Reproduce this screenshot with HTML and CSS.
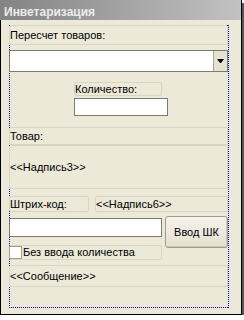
FILE: index.html
```html
<!DOCTYPE html>
<html>
<head>
<meta charset="utf-8">
<link rel="stylesheet" href="styles.css">
</head>
<body>
<div class="win">
  <div class="title">Инветаризация</div>
  <div class="form">
    <div class="lbl l1">Пересчет товаров:</div>
    <div class="combo">
      <div class="combo-field"></div>
      <div class="combo-btn"><svg width="7" height="4" viewBox="0 0 7 4"><path d="M0 0H7L4 4H3Z" fill="#000"/></svg></div>
    </div>
    <div class="qty">
      <div class="lbl qlbl">Количество:</div>
      <div class="input qinput"></div>
    </div>
    <div class="lbl tovar">Товар:</div>
    <div class="lbl n3">&lt;&lt;Надпись3&gt;&gt;</div>
    <div class="row bc">
      <div class="lbl bclbl">Штрих-код:</div>
      <div class="lbl n6">&lt;&lt;Надпись6&gt;&gt;</div>
    </div>
    <div class="row entry">
      <div class="col">
        <div class="input bcinput"></div>
        <div class="lbl chk"><span class="box"></span>Без ввода количества</div>
      </div>
      <div class="btn">Ввод ШК</div>
    </div>
    <div class="lbl msg">&lt;&lt;Сообщение&gt;&gt;</div>
  </div>
</div>
</body>
</html>
```
FILE: styles.css
```css
html, body {
  margin: 0;
  padding: 0;
  background: #ffffff;
}
body {
  font-family: "Liberation Sans", Arial, sans-serif;
  font-size: 11px;
  color: #000;
}
.win {
  width: 240px;
  height: 314px;
  border: 1px solid #000;
  border-top: 0;
  background: #ece9d8;
  box-shadow: 3px 3px 0 #575757;
}
.title {
  height: 20px;
  box-sizing: border-box;
  margin-left: -1px;
  padding: 6px 0 0 4px;
  line-height: 13px;
  font-size: 12px;
  font-weight: bold;
  color: #ececec;
  background: linear-gradient(to right, #838383, #c2c2c2);
}
.form {
  margin: 5px 0 0 8px;
  width: 218px;
  height: 281px;
  padding: 1px;
  background:
    url("data:image/svg+xml,%3Csvg xmlns='http://www.w3.org/2000/svg' width='2' height='1' shape-rendering='crispEdges'%3E%3Crect width='1' height='1' fill='%230000ff'/%3E%3C/svg%3E") left top / 2px 1px repeat-x,
    url("data:image/svg+xml,%3Csvg xmlns='http://www.w3.org/2000/svg' width='2' height='1' shape-rendering='crispEdges'%3E%3Crect width='1' height='1' fill='%230000ff'/%3E%3C/svg%3E") left bottom / 2px 1px repeat-x,
    url("data:image/svg+xml,%3Csvg xmlns='http://www.w3.org/2000/svg' width='1' height='2' shape-rendering='crispEdges'%3E%3Crect width='1' height='1' fill='%230000ff'/%3E%3C/svg%3E") left top / 1px 2px repeat-y,
    url("data:image/svg+xml,%3Csvg xmlns='http://www.w3.org/2000/svg' width='1' height='2' shape-rendering='crispEdges'%3E%3Crect width='1' height='1' fill='%230000ff'/%3E%3C/svg%3E") right top / 1px 2px repeat-y;
}
.form > * {
  margin-left: -1px;
}
.lbl {
  box-sizing: border-box;
  border: 1px solid #dad4c2;
  border-radius: 2px;
  display: flex;
  align-items: center;
  line-height: 13px;
  white-space: nowrap;
  background: #ece9d8;
}
.l1 {
  margin-top: -1px;
  height: 20px;
}
.combo {
  margin-top: 5px;
  height: 22px;
  box-sizing: border-box;
  border: 1px solid #7f7b6c;
  background: #fff;
  display: flex;
}
.combo-field {
  flex: 1;
}
.combo-btn {
  width: 13px;
  border-left: 1px solid #a9a592;
  background: #e6e2d2;
  display: flex;
  align-items: center;
  justify-content: center;
}
.qty {
  margin-top: 10px;
  margin-left: 64px !important;
  width: 94px;
}
.qlbl {
  width: 88px;
  height: 14px;
}
.input {
  box-sizing: border-box;
  background: #fff;
  border: 1px solid #7f7b6c;
}
.qinput {
  margin-top: 2px;
  height: 18px;
}
.tovar {
  margin-top: 11px;
  height: 18px;
}
.n3 {
  height: 44px;
}
.row {
  display: flex;
}
.bc {
  margin-top: 7px;
  height: 16px;
  gap: 6px;
}
.bclbl {
  width: 80px;
}
.n6 {
  flex: 1;
}
.entry {
  margin-top: 4px;
  gap: 3px;
  align-items: flex-start;
}
.col {
  width: 153px;
}
.bcinput {
  margin-top: 2px;
  height: 19px;
}
.chk {
  margin-top: 8px;
  height: 15px;
}
.box {
  width: 13px;
  height: 13px;
  box-sizing: border-box;
  margin-left: -1px;
  margin-right: 1px;
  background: #fff;
  border: 1px solid #a29e8c;
}
.btn {
  flex: 1;
  height: 32px;
  box-sizing: border-box;
  border: 1px solid #a19d8b;
  border-radius: 3px;
  background: linear-gradient(to bottom, #f5f3ec, #e4e0cf);
  box-shadow: inset -1px -1px 0 #cfcab6;
  display: flex;
  align-items: center;
  justify-content: center;
}
.msg {
  margin-top: 5px;
  height: 22px;
}
```
